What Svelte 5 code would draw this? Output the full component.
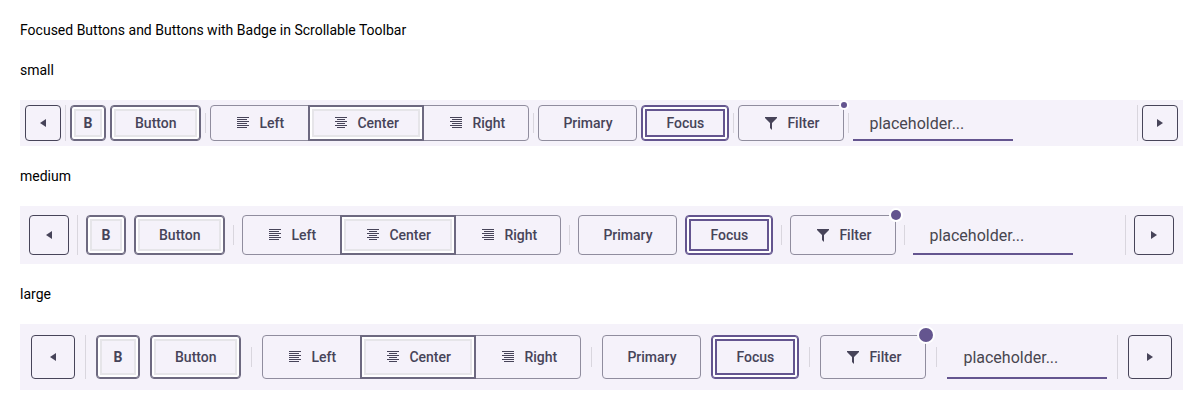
<script>
  const toolbars = [
    { size: 'small', pad: 5, gap: 4, height: 36, badge: 6 },
    { size: 'medium', pad: 9, gap: 8, height: 40, badge: 10 },
    { size: 'large', pad: 11, gap: 10, height: 44, badge: 14 }
  ];
  const alignments = [
    { name: 'Left', width: 99, path: 'M2 2h12v1H2zM2 4h10v1H2zM2 6h12v1H2zM2 8h10v1H2zM2 10h12v1H2zM2 12h10v1H2z' },
    { name: 'Center', width: 116, path: 'M2 2h12v1H2zM4 4h8v1H4zM2 6h12v1H2zM4 8h8v1H4zM2 10h12v1H2zM4 12h8v1H4z', focused: true },
    { name: 'Right', width: 106, path: 'M2 2h12v1H2zM4 4h10v1H4zM2 6h12v1H2zM4 8h10v1H4zM2 10h12v1H2zM4 12h10v1H4z' }
  ];
</script>

<main>
  <p>Focused Buttons and Buttons with Badge in Scrollable Toolbar</p>
  {#each toolbars as t}
    <p>{t.size}</p>
    <div class="toolbar" style="--pad:{t.pad}px;--gap:{t.gap}px;--h:{t.height}px;--badge:{t.badge}px">
      <button class="square scroll" aria-label="Previous">
        <svg viewBox="0 0 16 16"><path d="M11 4v8L5 8z" /></svg>
      </button>
      <span class="sep tall"></span>
      <div class="items">
        <button class="square focus"><b>B</b></button>
        <button class="focus text">Button</button>
        <span class="sep"></span>
        <div class="group">
          {#each alignments as a}
            <button class:focus={a.focused} style="width:{a.width}px">
              <svg viewBox="0 0 16 16" shape-rendering="crispEdges"><path d={a.path} /></svg><span class="label">{a.name}</span>
            </button>
          {/each}
        </div>
        <span class="sep"></span>
        <button class="main"><span class="label">Primary</span></button>
        <button class="focus primary"><span class="label">Focus</span></button>
        <span class="sep"></span>
        <button class="filter">
          <svg viewBox="0 0 16 16"><path d="M2 2h12v1L9 8v7l-2-2V8L2 3z" /></svg><span class="label">Filter</span>
          <span class="badge"></span>
        </button>
        <span class="sep"></span>
        <input type="text" placeholder="placeholder..." />
      </div>
      <span class="sep tall"></span>
      <button class="square scroll" aria-label="Next">
        <svg viewBox="0 0 16 16"><path d="M5 12V4l6 4z" /></svg>
      </button>
    </div>
  {/each}
</main>

<style>
  :global(body) { background: #fff; }
  main {
    box-sizing: border-box;
    width: 1200px;
    padding: 20px 17px 0 20px;
    font: 14px/20px Roboto, sans-serif;
    color: #000;
  }
  p { margin: 0 0 20px; }
  .toolbar {
    box-sizing: border-box;
    display: flex;
    align-items: center;
    gap: var(--gap);
    padding: var(--pad);
    margin-bottom: 20px;
    background: #f5f2fa;
  }
  .items { display: flex; flex: 1; align-items: center; gap: var(--gap); }
  .sep { width: 1px; height: 20px; background: #d9d6de; flex: none; }
  .tall { height: var(--h); }
  button {
    position: relative;
    box-sizing: border-box;
    display: flex;
    flex: none;
    align-items: center;
    justify-content: flex-start;
    gap: 8px;
    height: var(--h);
    margin: 0;
    padding: 0 0 0 24px;
    border: 1px solid #908d9e;
    border-radius: 4px;
    background: transparent;
    color: #474459;
    font: 500 14px/20px Roboto, sans-serif;
    white-space: nowrap;
  }
  b { font-weight: 700; }
  svg { display: block; flex: none; width: 16px; height: 16px; fill: currentColor; }
  .label { padding-left: 0.4px; }
  .square { width: var(--h); padding: 0; justify-content: center; }
  .text { width: 91px; }
  .main { width: 99px; }
  .filter { width: 106px; }
  .scroll { border-color: #474459; }
  .focus {
    border-color: #6d6980;
    box-shadow: inset 0 0 0 1px #6d6980, inset 0 0 0 3px #fff, inset 0 0 0 5px #e6e5e9;
  }
  .primary {
    width: 88px;
    border-color: #64558f;
    box-shadow: inset 0 0 0 1px #64558f, inset 0 0 0 3px #fff, inset 0 0 0 5px #64558f;
  }
  .group { display: flex; }
  .group button { border-radius: 0; }
  .group button + button { margin-left: -1px; }
  .group button:first-child { border-radius: 4px 0 0 4px; }
  .group button:last-child { border-radius: 0 4px 4px 0; }
  .group .focus { z-index: 1; }
  .badge {
    position: absolute;
    top: -1px;
    right: -1px;
    width: var(--badge);
    height: var(--badge);
    border-radius: 50%;
    background: #64558f;
    box-shadow: 0 0 0 2px #fff;
    transform: translate(50%, -50%);
  }
  input {
    box-sizing: border-box;
    width: 160px;
    height: var(--h);
    padding: 2px 16px 0 16.4px;
    border: 0;
    border-bottom: 2px solid #64558f;
    background: transparent;
    font: 16px/24px Roboto, sans-serif;
    color: #48464f;
  }
  input::placeholder { color: #48464f; opacity: 1; }
</style>
